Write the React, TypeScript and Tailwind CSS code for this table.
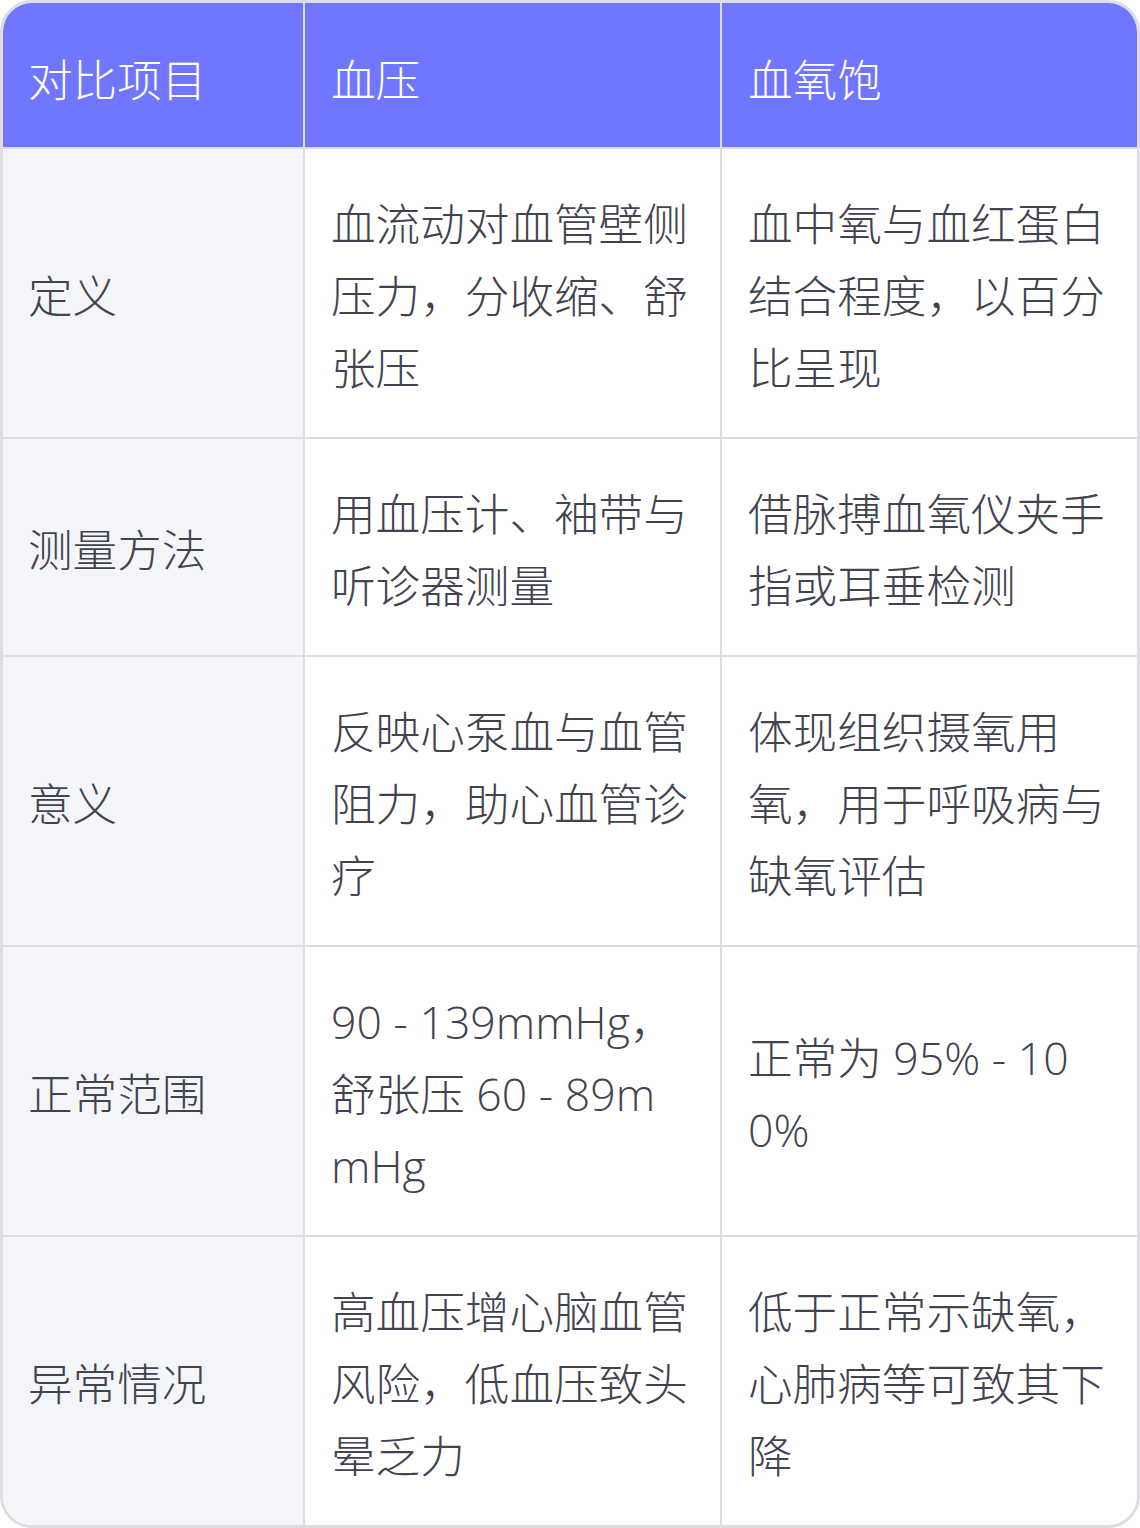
import React from "react";

const rows: [string, string, string][] = [
  ["定义", "血流动对血管壁侧压力，分收缩、舒张压", "血中氧与血红蛋白结合程度，以百分比呈现"],
  ["测量方法", "用血压计、袖带与听诊器测量", "借脉搏血氧仪夹手指或耳垂检测"],
  ["意义", "反映心泵血与血管阻力，助心血管诊疗", "体现组织摄氧用氧，用于呼吸病与缺氧评估"],
  ["正常范围", "90 - 139mmHg，舒张压 60 - 89mmHg", "正常为 95% - 100%"],
  ["异常情况", "高血压增心脑血管风险，低血压致头晕乏力", "低于正常示缺氧，心肺病等可致其下降"],
];

export default function App() {
  return (
    <div
      className="w-[1140px] bg-white"
      style={{ fontFamily: '"Open Sans", "Noto Sans CJK SC", sans-serif' }}
    >
      <div className="border-[3px] border-[#dedee2] rounded-[32px] overflow-hidden">
        <table className="w-full table-fixed border-collapse text-[44.6px] leading-[72px] font-light">
          <colgroup>
            <col className="w-[301px]" />
            <col className="w-[417px]" />
            <col />
          </colgroup>
          <thead>
            <tr className="bg-[#7076ff] text-white">
              <th className="text-left font-light pl-[25px] pr-[28px] pt-[41px] pb-[31px] border-r-2 border-b-2 border-[#dcdde3]">对比项目</th>
              <th className="text-left font-light pl-[26px] pr-[30px] pt-[41px] pb-[31px] border-r-2 border-b-2 border-[#dcdde3]">血压</th>
              <th className="text-left font-light pl-[26px] pr-[30px] pt-[41px] pb-[31px] border-b-2 border-[#dcdde3]">血氧饱</th>
            </tr>
          </thead>
          <tbody className="text-[#41434f]">
            {rows.map((r, i) => (
              <tr key={i}>
                <td className={`bg-[#f4f5f9] pl-[25px] pr-[28px] pt-[39px] pb-[33px] align-middle border-r-2 border-[#dcdde3] ${i < rows.length - 1 ? "border-b-2" : ""}`}>{r[0]}</td>
                <td className={`pl-[26px] pr-[30px] pt-[39px] pb-[33px] align-middle break-all border-r-2 border-[#dcdde3] ${i < rows.length - 1 ? "border-b-2" : ""}`}>{r[1]}</td>
                <td className={`pl-[26px] pr-[30px] pt-[39px] pb-[33px] align-middle break-all border-[#dcdde3] ${i < rows.length - 1 ? "border-b-2" : ""}`}>{r[2]}</td>
              </tr>
            ))}
          </tbody>
        </table>
      </div>
    </div>
  );
}
